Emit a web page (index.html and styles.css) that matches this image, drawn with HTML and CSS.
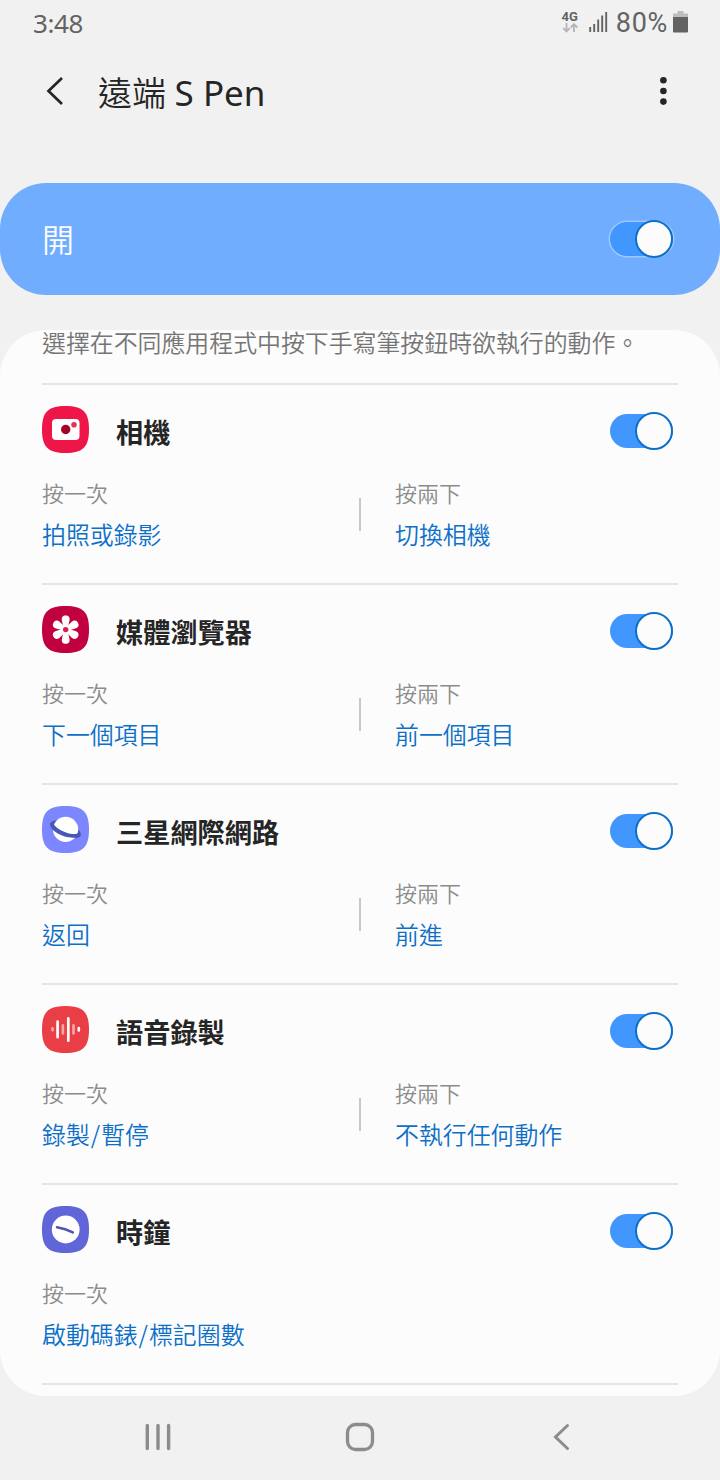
FILE: index.html
```html
<!DOCTYPE html>
<html lang="zh-Hant">
<head>
    <meta charset="UTF-8">
    <meta name="viewport" content="width=device-width, initial-scale=1.0">
    <title>遠端 S Pen</title>
    <link rel="stylesheet" href="styles.css">
</head>
<body>
    <div class="status-bar">
        <span class="time">3:48</span>
        <div class="network">
            <span>4G</span>
            <svg width="16" height="10" viewBox="0 0 16 10">
                <path d="M4.5 0v8M1.2 5.2l3.3 3.3 3.3-3.3M12 9V1.2M8.7 4.5L12 1.2l3.3 3.3" fill="none" stroke="#b4b4b4" stroke-width="1.8"/>
            </svg>
        </div>
        <svg class="signal" width="19" height="20" viewBox="0 0 19 20">
            <path d="M1.2 15v5M5.2 12v8M9.2 7.5V20M13.2 3.5V20M17.2 0v20" fill="none" stroke="#636363" stroke-width="1.9"/>
        </svg>
        <span class="percent">80%</span>
        <svg class="battery" width="15" height="22" viewBox="0 0 15 22">
            <path d="M4.5 0h6v2.5H15V8H0V2.5h4.5z" fill="#bdbdbd"/>
            <path d="M0 6h15v14.5a1 1 0 0 1-1 1H1a1 1 0 0 1-1-1z" fill="#636363"/>
        </svg>
    </div>

    <header class="app-bar">
        <svg width="18" height="30" viewBox="0 0 18 30">
            <path d="M16 2L2.5 15 16 28" fill="none" stroke="#252525" stroke-width="2.7"/>
        </svg>
        <h1>遠端 <span class="latin">S Pen</span></h1>
        <svg class="more" width="8" height="30" viewBox="0 0 8 30">
            <g fill="#252525">
                <circle cx="4.4" cy="4.2" r="3.3"/>
                <circle cx="4.4" cy="15" r="3.3"/>
                <circle cx="4.4" cy="25.6" r="3.3"/>
            </g>
        </svg>
    </header>

    <div class="master">
        <span>開</span>
        <div class="switch"></div>
    </div>

    <main class="panel">
        <p class="description">選擇在不同應用程式中按下手寫筆按鈕時欲執行的動作。</p>

        <section class="app">
            <div class="app-head">
                <svg class="icon" width="47" height="47" viewBox="0 0 47 47">
                    <path d="M23.5 0C41 0 47 6 47 23.5S41 47 23.5 47 0 41 0 23.5 6 0 23.5 0z" fill="#ee1549"/>
                    <rect x="10" y="13" width="27.5" height="21" rx="4" fill="#fff"/>
                    <circle cx="23.7" cy="23.5" r="4.7" fill="#9e0528"/>
                    <circle cx="32" cy="18.7" r="2.8" fill="#e23358"/>
                </svg>
                <h2>相機</h2>
                <div class="switch"></div>
            </div>
            <div class="actions">
                <div class="action">
                    <div class="label">按一次</div>
                    <div class="value">拍照或錄影</div>
                </div>
                <div class="action">
                    <div class="label">按兩下</div>
                    <div class="value">切換相機</div>
                </div>
            </div>
        </section>

        <section class="app">
            <div class="app-head">
                <svg class="icon" width="47" height="47" viewBox="0 0 47 47">
                    <path d="M23.5 0C41 0 47 6 47 23.5S41 47 23.5 47 0 41 0 23.5 6 0 23.5 0z" fill="#c1003f"/>
                    <defs>
                        <path id="petal" d="M21.7 22L20.1 15.5C19 11.5 20.8 9.6 23.7 9.6s4.7 1.9 3.6 5.9L25.7 22z"/>
                    </defs>
                    <g fill="#fff">
                        <use href="#petal"/>
                        <use href="#petal" transform="rotate(60 23.7 23.7)"/>
                        <use href="#petal" transform="rotate(120 23.7 23.7)"/>
                        <use href="#petal" transform="rotate(180 23.7 23.7)"/>
                        <use href="#petal" transform="rotate(240 23.7 23.7)"/>
                        <use href="#petal" transform="rotate(300 23.7 23.7)"/>
                        <circle cx="23.7" cy="23.7" r="4.6"/>
                    </g>
                    <circle cx="23.7" cy="23.6" r="2.7" fill="#e3194b"/>
                </svg>
                <h2>媒體瀏覽器</h2>
                <div class="switch"></div>
            </div>
            <div class="actions">
                <div class="action">
                    <div class="label">按一次</div>
                    <div class="value">下一個項目</div>
                </div>
                <div class="action">
                    <div class="label">按兩下</div>
                    <div class="value">前一個項目</div>
                </div>
            </div>
        </section>

        <section class="app">
            <div class="app-head">
                <svg class="icon" width="47" height="47" viewBox="0 0 47 47">
                    <path d="M23.5 0C41 0 47 6 47 23.5S41 47 23.5 47 0 41 0 23.5 6 0 23.5 0z" fill="#7b86ff"/>
                    <ellipse cx="23.5" cy="23.4" rx="16.3" ry="6.8" transform="rotate(22 23.5 23.4)" fill="#4757b5"/>
                    <circle cx="23.6" cy="23.4" r="12.6" fill="#fff"/>
                    <path d="M8.3 17.3C6.8 26.5 29 35.6 38.3 29.9L37.4 26C35.5 28.6 30 28.6 24 26.4C15.5 23.4 10.8 19.4 11.6 15.6z" fill="#4757b5"/>
                </svg>
                <h2>三星網際網路</h2>
                <div class="switch"></div>
            </div>
            <div class="actions">
                <div class="action">
                    <div class="label">按一次</div>
                    <div class="value">返回</div>
                </div>
                <div class="action">
                    <div class="label">按兩下</div>
                    <div class="value">前進</div>
                </div>
            </div>
        </section>

        <section class="app">
            <div class="app-head">
                <svg class="icon" width="47" height="47" viewBox="0 0 47 47">
                    <path d="M23.5 0C41 0 47 6 47 23.5S41 47 23.5 47 0 41 0 23.5 6 0 23.5 0z" fill="#e93e45"/>
                    <g fill="none" stroke-width="2.7" stroke-linecap="round">
                        <path d="M10.6 22.4v1.8M20.9 19.4v8M31.5 19.4v8" stroke="#f8a5a9"/>
                        <path d="M15.6 15.7v15.5M26.3 12.3v22.4M36.8 22.2v2.2" stroke="#fff"/>
                    </g>
                </svg>
                <h2>語音錄製</h2>
                <div class="switch"></div>
            </div>
            <div class="actions">
                <div class="action">
                    <div class="label">按一次</div>
                    <div class="value">錄製<span class="slash">/</span>暫停</div>
                </div>
                <div class="action">
                    <div class="label">按兩下</div>
                    <div class="value">不執行任何動作</div>
                </div>
            </div>
        </section>

        <section class="app">
            <div class="app-head">
                <svg class="icon" width="47" height="47" viewBox="0 0 47 47">
                    <path d="M23.5 0C41 0 47 6 47 23.5S41 47 23.5 47 0 41 0 23.5 6 0 23.5 0z" fill="#6065d7"/>
                    <circle cx="23.7" cy="23.5" r="13.9" fill="#fff"/>
                    <path d="M15 21.3Q23.5 22.6 30.8 26.4" fill="none" stroke="#5055b5" stroke-width="2.5" stroke-linecap="round"/>
                </svg>
                <h2>時鐘</h2>
                <div class="switch"></div>
            </div>
            <div class="actions">
                <div class="action">
                    <div class="label">按一次</div>
                    <div class="value">啟動碼錶<span class="slash">/</span>標記圈數</div>
                </div>
            </div>
        </section>
        <hr>
    </main>

    <nav class="nav-bar">
        <svg width="30" height="30" viewBox="0 0 30 30">
            <path d="M4.3 3.5v23M15 3.5v23M25.6 3.5v23" stroke="#8c8c8c" stroke-width="3.4" stroke-linecap="round"/>
        </svg>
        <svg width="30" height="30" viewBox="0 0 30 30">
            <rect x="2.5" y="2.5" width="25" height="25" rx="8" fill="none" stroke="#8c8c8c" stroke-width="3.3"/>
        </svg>
        <svg width="30" height="30" viewBox="0 0 30 30">
            <path d="M21.5 3.5L9.5 15l12 11.5" fill="none" stroke="#8c8c8c" stroke-width="3" stroke-linecap="round"/>
        </svg>
    </nav>
</body>
</html>
```
FILE: styles.css
```css
*, *::after {
    box-sizing: border-box;
}

body {
    width: 720px;
    height: 1480px;
    margin: 0;
    overflow: hidden;
    background-color: #f1f1f1;
    color: #252525;
    font-family: "Noto Sans CJK TC", sans-serif;
    font-weight: 350;
    display: flex;
    flex-direction: column;
}

svg {
    display: block;
    flex: none;
}

h1, h2, p {
    margin: 0;
}

.status-bar {
    height: 46px;
    padding: 0 32px 0 33px;
    display: flex;
    align-items: center;
    color: #636363;
}

.time {
    margin-right: auto;
    font: 26px "Noto Sans", sans-serif;
    letter-spacing: -0.4px;
}

.network {
    margin: -3px 11px 0 0;
    display: flex;
    flex-direction: column;
    align-items: center;
    font: bold 13px/13px Roboto, sans-serif;
}

.signal {
    margin: -2px 8px 0 0;
}

.percent {
    margin-right: 5px;
    font: 27px Roboto, sans-serif;
    letter-spacing: 0.7px;
}

.battery {
    margin-top: -2px;
}

.app-bar {
    height: 137px;
    padding: 0 53px 47px 46px;
    display: flex;
    align-items: center;
}

.app-bar h1 {
    margin: 2px 0 0 34px;
    font-size: 34px;
    font-weight: 350;
    line-height: 88px;
}

.latin {
    margin-left: 1px;
    font-family: "Noto Sans", sans-serif;
    font-weight: 400;
    font-size: 35px;
}

.more {
    margin-left: auto;
}

.master {
    height: 112px;
    padding: 0 47px 0 42px;
    border-radius: 46px;
    background-color: #70adff;
    color: #fcfcfc;
    font-size: 32px;
    display: flex;
    align-items: center;
    justify-content: space-between;
}

.master span {
    margin-top: -2px;
}

.switch {
    position: relative;
    width: 63px;
    height: 34px;
    border-radius: 17px;
    background-color: #4297ff;
}

.switch::after {
    content: "";
    position: absolute;
    top: -2px;
    right: 0;
    width: 38px;
    height: 38px;
    border: 2px solid #0d70c8;
    border-radius: 50%;
    background-color: #fcfcfc;
}

.master .switch {
    box-shadow: 0 0 0 1.5px #9cc8ff;
}

.panel {
    height: 1066px;
    margin-top: 35px;
    padding: 0 42px;
    border-radius: 46px;
    background-color: #fcfcfc;
}

.description {
    height: 53px;
    color: #757575;
    font-size: 23.9px;
    line-height: 24px;
    white-space: nowrap;
}

.app {
    height: 200px;
    border-top: 2px solid #e5e5e5;
}

.app-head {
    height: 89px;
    padding-right: 5px;
    display: flex;
    align-items: center;
}

.app-head h2 {
    margin: 3px 0 0 27px;
    font-size: 27.2px;
    font-weight: 700;
    line-height: 40px;
}

.app-head .switch {
    margin: 3px 0 0 auto;
}

.actions {
    display: grid;
    grid-template-columns: 317px 1fr;
}

.action + .action {
    padding-left: 36px;
    background: linear-gradient(#c8c8c8, #c8c8c8) 0 24px / 2px 33px no-repeat;
}

.label {
    color: #8c8c8c;
    font-size: 22px;
    line-height: 37px;
}

.value {
    color: #0d70c8;
    font-size: 23.9px;
    line-height: 45px;
}

.slash {
    padding: 0 1px;
}

hr {
    height: 2px;
    margin: 0;
    border: none;
    background-color: #e5e5e5;
}

.nav-bar {
    height: 84px;
    padding: 0 144px 2px 143px;
    display: flex;
    align-items: center;
    justify-content: space-between;
}
```
